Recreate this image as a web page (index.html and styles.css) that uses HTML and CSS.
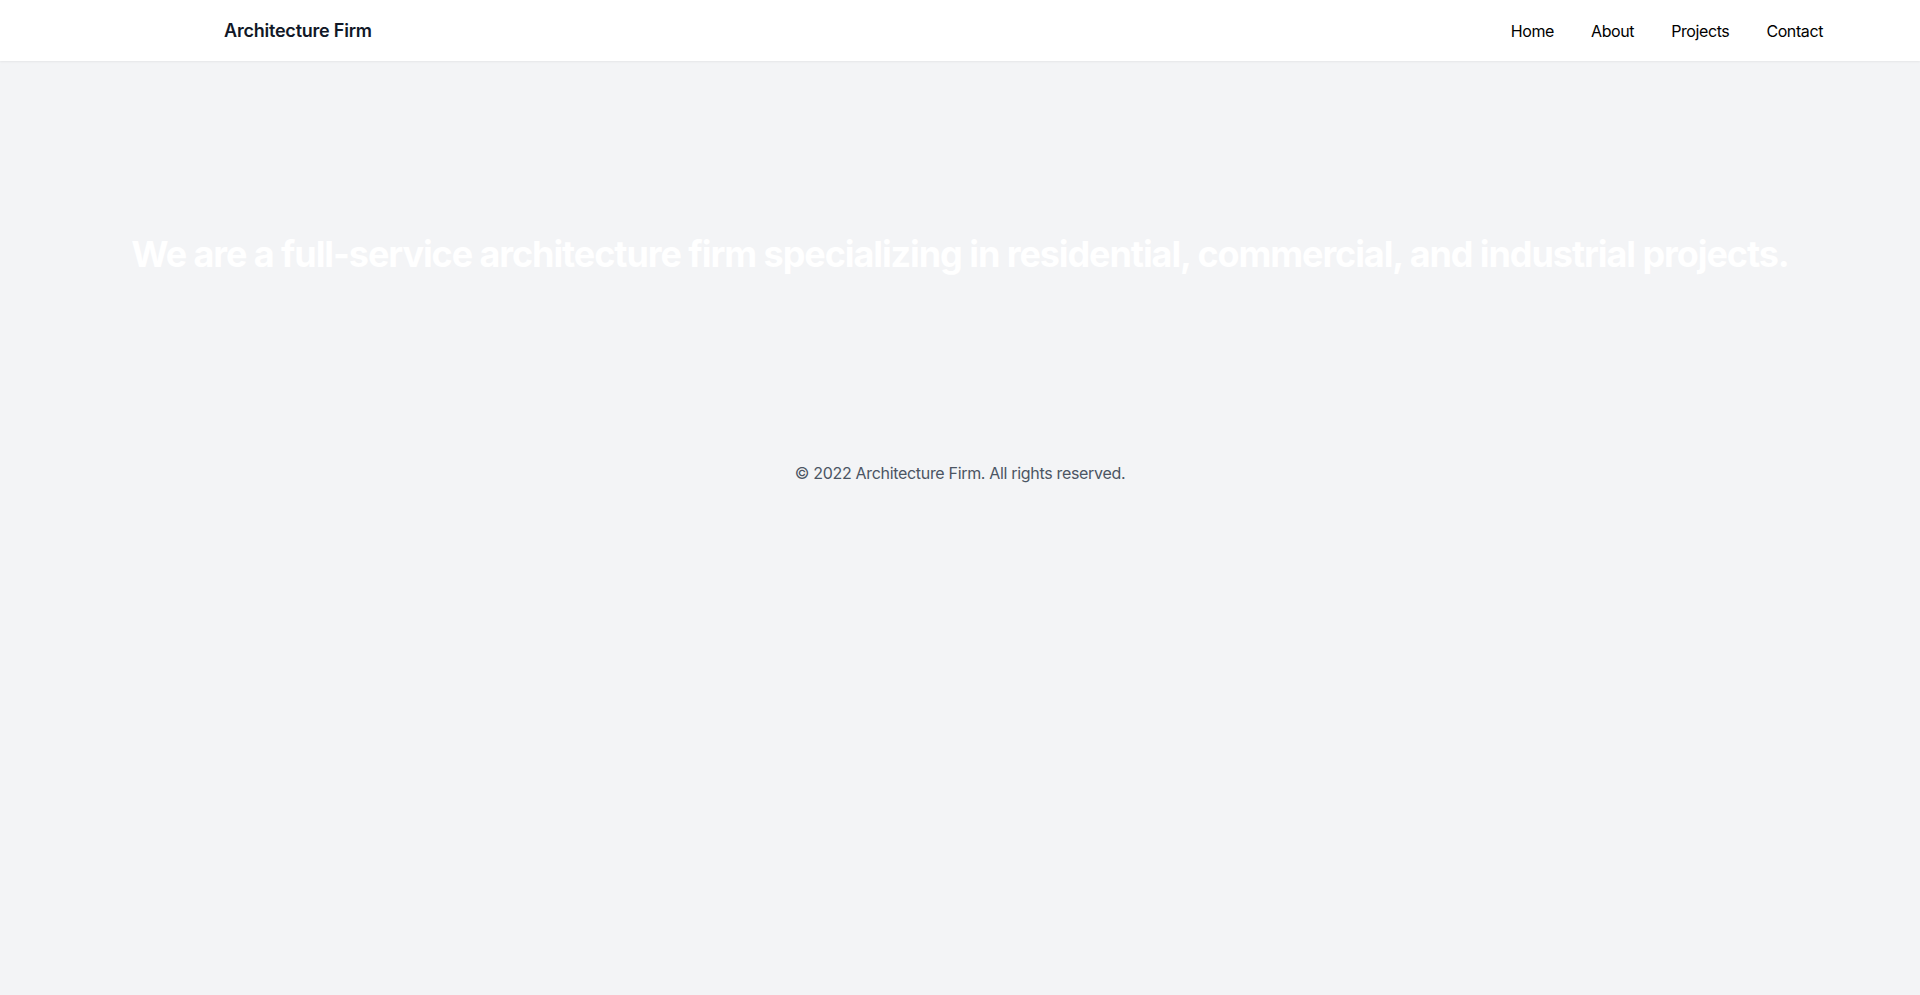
FILE: index.html
```html
<!DOCTYPE html>
<html lang="en">
<head>
<meta charset="utf-8">
<title>Architecture Firm</title>
<link rel="stylesheet" href="styles.css">
</head>
<body>
<header class="site-header">
  <div class="header-inner">
    <a class="logo" href="#">Architecture Firm</a>
    <nav class="main-nav">
      <a href="#">Home</a>
      <a href="#">About</a>
      <a href="#">Projects</a>
      <a href="#">Contact</a>
    </nav>
  </div>
</header>
<section class="hero">
  <h1 class="hero-title">We are a full-service architecture firm specializing in residential, commercial, and industrial projects.</h1>
</section>
<footer class="site-footer">
  <p>&copy; 2022 Architecture Firm. All rights reserved.</p>
</footer>
</body>
</html>
```

FILE: styles.css
```css
* { box-sizing: border-box; }
html, body { margin: 0; padding: 0; }
body {
  background: #f3f4f6;
  font-family: Inter, "Liberation Sans", sans-serif;
  min-height: 100vh;
}
a { text-decoration: none; }
.site-header {
  background: #ffffff;
  box-shadow: 0 1px 2px 0 rgba(0, 0, 0, 0.06);
  position: relative;
}
.header-inner {
  display: flex;
  align-items: center;
  justify-content: space-between;
  padding: 16px 97px 16px 224px;
}
.logo {
  font-size: 18px;
  line-height: 28px;
  font-weight: 600;
  color: #111827;
  letter-spacing: -0.012em;
  padding-top: 1px;
}
.main-nav {
  display: flex;
  gap: 37px;
  padding-top: 1px;
}
.main-nav a {
  font-size: 16px;
  line-height: 24px;
  color: #000000;
  letter-spacing: -0.025em;
}
.hero {
  height: 384px;
  padding-top: 2px;
  display: flex;
  align-items: center;
  justify-content: center;
}
.hero-title {
  margin: 0;
  font-size: 36px;
  line-height: 40px;
  font-weight: 700;
  color: #ffffff;
  text-align: center;
  letter-spacing: -0.03em;
}
.site-footer {
  padding: 16px 0 14px;
  text-align: center;
}
.site-footer p {
  margin: 0;
  font-size: 16px;
  line-height: 24px;
  color: #4b5563;
  letter-spacing: -0.02em;
}
```
